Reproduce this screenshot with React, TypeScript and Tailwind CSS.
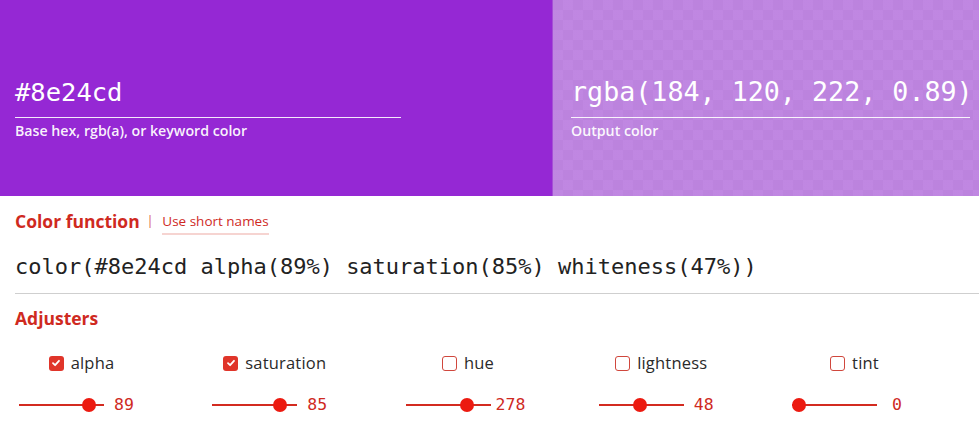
import React from "react";

const sans = { fontFamily: "'Open Sans', sans-serif" };
const mono = { fontFamily: "'DejaVu Sans Mono', monospace" };

type Adj = { name: string; checked: boolean; value: number; max: number };
const adjusters: Adj[] = [
  { name: "alpha", checked: true, value: 89, max: 100 },
  { name: "saturation", checked: true, value: 85, max: 100 },
  { name: "hue", checked: false, value: 278, max: 360 },
  { name: "lightness", checked: false, value: 48, max: 100 },
  { name: "tint", checked: false, value: 0, max: 100 },
];

function Check({ checked }: { checked: boolean }) {
  if (checked) {
    return (
      <span className="flex h-[15px] w-[15px] items-center justify-center rounded-[3px] bg-[#e0352a]">
        <svg width="10" height="10" viewBox="0 0 10 10" fill="none">
          <path d="M2 5.2 L4.1 7.2 L8 2.8" stroke="white" strokeWidth="1.8" strokeLinecap="round" strokeLinejoin="round" />
        </svg>
      </span>
    );
  }
  return <span className="block h-[15px] w-[15px] rounded-[3px] border-[1.5px] border-[#d0473d] bg-white" />;
}

function Slider({ value, max }: { value: number; max: number }) {
  const left = 7 + (value / max) * 71;
  return (
    <div className="relative h-[24px] w-[85px]">
      <div className="absolute left-0 right-0 top-[11px] h-[2px] bg-[#d32b20]" />
      <div
        className="absolute top-[5px] h-[14px] w-[14px] rounded-full bg-[#ec1a10]"
        style={{ left: left - 7 }}
      />
    </div>
  );
}

export default function App() {
  return (
    <div className="w-[979px] h-[440px] overflow-hidden bg-white" style={sans}>
      <div className="flex h-[196px]">
        <div className="w-[552px] shrink-0 bg-[#9528d4] px-[15px] pt-[75px]">
          <div className="w-[386px] border-b border-white/90 pb-[8px]">
            <div className="text-[25.5px] leading-[34px] text-white" style={mono}>#8e24cd</div>
          </div>
          <div className="mt-[4px] text-[14.2px] font-semibold leading-[18px] text-white/95">
            Base hex, rgb(a), or keyword color
          </div>
        </div>
        <div
          className="min-w-0 flex-1 overflow-hidden border-l border-[#a54fd6]"
          style={{
            backgroundImage:
              "linear-gradient(rgba(184,120,222,0.89), rgba(184,120,222,0.89)), conic-gradient(#ffffff 25%, #dcdcdc 0 50%, #ffffff 0 75%, #dcdcdc 0)",
            backgroundSize: "100% 100%, 20px 20px",
          }}
        >
          <div className="pl-[18px] pr-[9px] pt-[75px]">
            <div className="border-b border-white/90 pb-[8px]">
              <div className="whitespace-nowrap text-[26.7px] leading-[34px] text-white" style={mono}>
                rgba(184, 120, 222, 0.89)
              </div>
            </div>
            <div className="mt-[4px] text-[14.2px] font-semibold leading-[18px] text-white/95">Output color</div>
          </div>
        </div>
      </div>

      <div className="pl-[15px]">
        <div className="mt-[13px] flex items-center h-[24px]">
          <span className="text-[17.5px] font-bold leading-[24px] text-[#cf2a1f]">Color function</span>
          <span className="ml-[7px] text-[12px] text-[#d85048]">|</span>
          <span className="ml-[9px] mt-[6px] border-b-2 border-[#f6d4d1] pb-[4px] text-[13.5px] leading-[16px] text-[#cf2a1f]">
            Use short names
          </span>
        </div>
        <div className="mt-[19px] border-b border-[#cfcfcf] pb-[11px]">
          <div className="whitespace-nowrap text-[22px] leading-[30px] text-[#222]" style={mono}>
            color(#8e24cd alpha(89%) saturation(85%) whiteness(47%))
          </div>
        </div>
        <div className="mt-[12px] text-[17.5px] font-bold leading-[24px] text-[#cf2a1f]">Adjusters</div>
      </div>

      <div className="mt-[21px] grid grid-cols-[repeat(5,193.25px)] pl-[19px]">
        {adjusters.map((a) => (
          <div key={a.name} className="flex w-[125px] flex-col items-center">
            <div className="flex h-[24px] items-center gap-[7px]">
              <Check checked={a.checked} />
              <span className="text-[16.5px] tracking-[0.2px] leading-[24px] text-[#2a2a2a]">{a.name}</span>
            </div>
            <div className="mt-[18px] flex items-center">
              <Slider value={a.value} max={a.max} />
              <span className="w-[40px] text-center text-[16.5px] leading-[24px] text-[#cf2a1f]" style={mono}>
                {a.value}
              </span>
            </div>
          </div>
        ))}
      </div>
    </div>
  );
}
